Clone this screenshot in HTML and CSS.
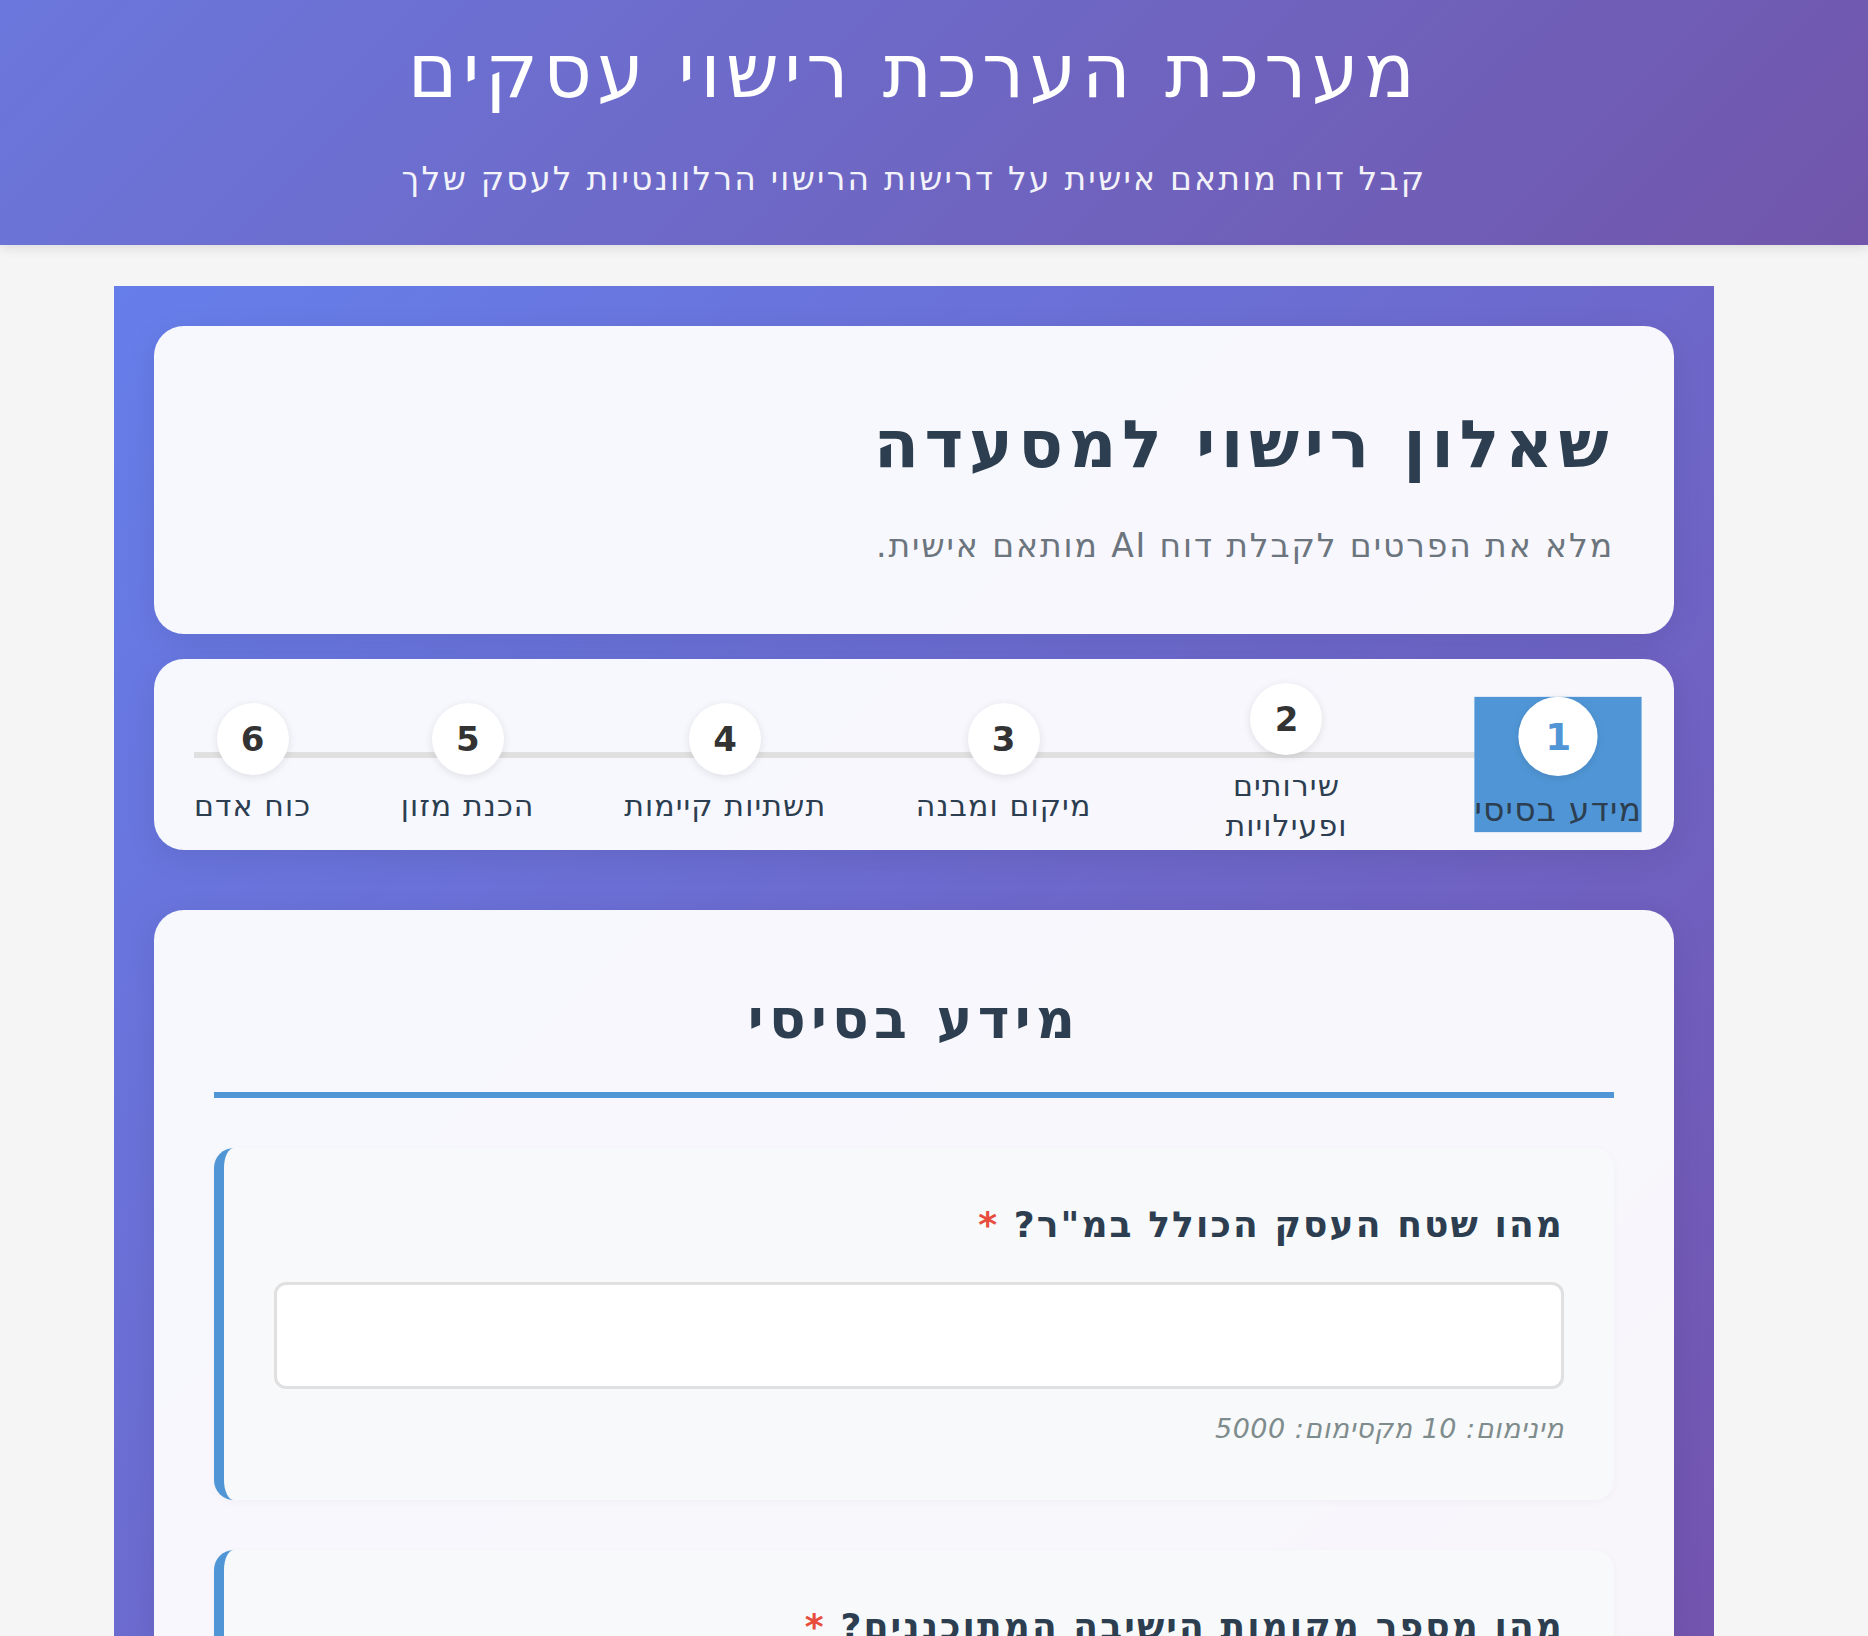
FILE: index.html
```html
<!DOCTYPE html>
<html lang="he" dir="rtl">
<head>
<meta charset="utf-8">
<title>מערכת הערכת רישוי עסקים</title>
<link rel="stylesheet" href="styles.css">
</head>
<body>
<header class="site-header">
  <div class="site-header__inner">
    <h1 class="site-header__title">מערכת הערכת רישוי עסקים</h1>
    <p class="site-header__subtitle">קבל דוח מותאם אישית על דרישות הרישוי הרלוונטיות לעסק שלך</p>
  </div>
</header>

<main class="app">
  <section class="card intro">
    <h2 class="intro__title">שאלון רישוי למסעדה</h2>
    <p class="intro__text">מלא את הפרטים לקבלת דוח AI מותאם אישית.</p>
  </section>

  <nav class="card steps-card">
    <div class="steps">
      <div class="step step--active">
        <div class="step__num">1</div>
        <div class="step__label">מידע בסיסי</div>
      </div>
      <div class="step step--narrow">
        <div class="step__num">2</div>
        <div class="step__label">שירותים ופעילויות</div>
      </div>
      <div class="step">
        <div class="step__num">3</div>
        <div class="step__label">מיקום ומבנה</div>
      </div>
      <div class="step">
        <div class="step__num">4</div>
        <div class="step__label">תשתיות קיימות</div>
      </div>
      <div class="step">
        <div class="step__num">5</div>
        <div class="step__label">הכנת מזון</div>
      </div>
      <div class="step">
        <div class="step__num">6</div>
        <div class="step__label">כוח אדם</div>
      </div>
    </div>
  </nav>

  <section class="card form-card">
    <h3 class="section-title">מידע בסיסי</h3>

    <div class="question">
      <label class="question__label" for="area">מהו שטח העסק הכולל במ"ר? <span class="question__req">*</span></label>
      <input class="question__input" id="area" type="number">
      <div class="question__hint">מינימום: 10 מקסימום: 5000</div>
    </div>

    <div class="question">
      <label class="question__label" for="seats">מהו מספר מקומות הישיבה המתוכננים? <span class="question__req">*</span></label>
      <input class="question__input" id="seats" type="number">
    </div>
  </section>
</main>
</body>
</html>
```
FILE: styles.css
```css
* { box-sizing: border-box; }

html, body { margin: 0; padding: 0; }

body {
  background: #f5f5f5;
  font-family: "DejaVu Sans", "Liberation Sans", sans-serif;
  color: #2c3e50;
}

.site-header {
  height: 245px;
  background: linear-gradient(135deg, #6b77dc 0%, #7156ab 100%);
  color: #fff;
  box-shadow: 0 2px 12px rgba(0, 0, 0, 0.12);
}

.site-header__inner {
  margin: 0 154px 0 114px;
  padding-top: 28px;
  text-align: center;
}

.site-header__title {
  margin: 0;
  font-size: 75px;
  line-height: 86px;
  font-weight: 400;
  letter-spacing: 5.2px;
}

.site-header__subtitle {
  margin: 41px 0 0;
  font-size: 33px;
  line-height: 48px;
  letter-spacing: 2.2px;
  opacity: 0.92;
}

.app {
  min-height: 2000px;
  margin: 41px 154px 0 114px;
  padding: 40px;
  background: linear-gradient(135deg, #667eea 0%, #764ba2 100%);
  display: flex;
  flex-direction: column;
}

.card {
  background: rgba(255, 255, 255, 0.95);
  border-radius: 30px;
  box-shadow: 0 8px 32px rgba(0, 0, 0, 0.08);
}

.intro {
  padding: 83px 60px 64px;
  margin-bottom: 25px;
}

.intro__title {
  margin: 0;
  font-size: 66px;
  line-height: 72px;
  font-weight: 700;
  letter-spacing: 5.5px;
  color: #2c3e50;
}

.intro__text {
  margin: 41px 0 0;
  font-size: 33px;
  line-height: 48px;
  letter-spacing: 1.9px;
  color: #6c757d;
}

.steps-card {
  position: relative;
  padding: 24px 40px 4px;
  margin-bottom: 60px;
}

.steps-card::before {
  content: "";
  position: absolute;
  left: 40px;
  right: 40px;
  top: 93px;
  height: 6px;
  background: #e0e0e0;
}

.steps {
  position: relative;
  display: flex;
  justify-content: space-between;
  align-items: center;
}

.step {
  display: flex;
  flex-direction: column;
  align-items: center;
  position: relative;
  z-index: 1;
}

.step--narrow { max-width: 211px; }

.step__num {
  width: 72px;
  height: 72px;
  border-radius: 50%;
  background: #fff;
  box-shadow: 0 2px 8px rgba(0, 0, 0, 0.1);
  display: flex;
  align-items: center;
  justify-content: center;
  font-size: 34px;
  font-weight: 700;
  color: #333;
}

.step__label {
  margin-top: 11px;
  font-size: 30px;
  line-height: 40px;
  letter-spacing: 1.1px;
  text-align: center;
  color: #2c3e50;
}

.step--active {
  background: #5096d6;
  transform: scale(1.1);
}

.step--active .step__num { color: #5096d6; }

.form-card {
  padding: 80px 60px 60px;
}

.section-title {
  margin: 0 0 50px;
  padding-bottom: 42px;
  border-bottom: 6px solid #5096d6;
  font-size: 54px;
  line-height: 60px;
  font-weight: 700;
  letter-spacing: 5.3px;
  text-align: center;
  color: #2c3e50;
}

.question {
  background: #f8f9fa;
  border-left: 10px solid #5096d6;
  border-radius: 20px;
  padding: 50px;
  margin-bottom: 50px;
  box-shadow: 0 2px 10px rgba(0, 0, 0, 0.03);
}

.question__label {
  display: block;
  margin-bottom: 30px;
  font-size: 36px;
  line-height: 54px;
  font-weight: 700;
  letter-spacing: 2.1px;
  color: #2c3e50;
}

.question__req { color: #e74c3c; }

.question__input {
  display: block;
  width: 100%;
  height: 107px;
  border: 3px solid #e0e0e0;
  border-radius: 12px;
  background: #fff;
  font-family: inherit;
  font-size: 30px;
  padding: 0 24px;
}

.question__hint {
  margin-top: 19px;
  font-size: 27px;
  line-height: 42px;
  letter-spacing: 0.5px;
  font-style: italic;
  color: #7f8c8d;
}
```
